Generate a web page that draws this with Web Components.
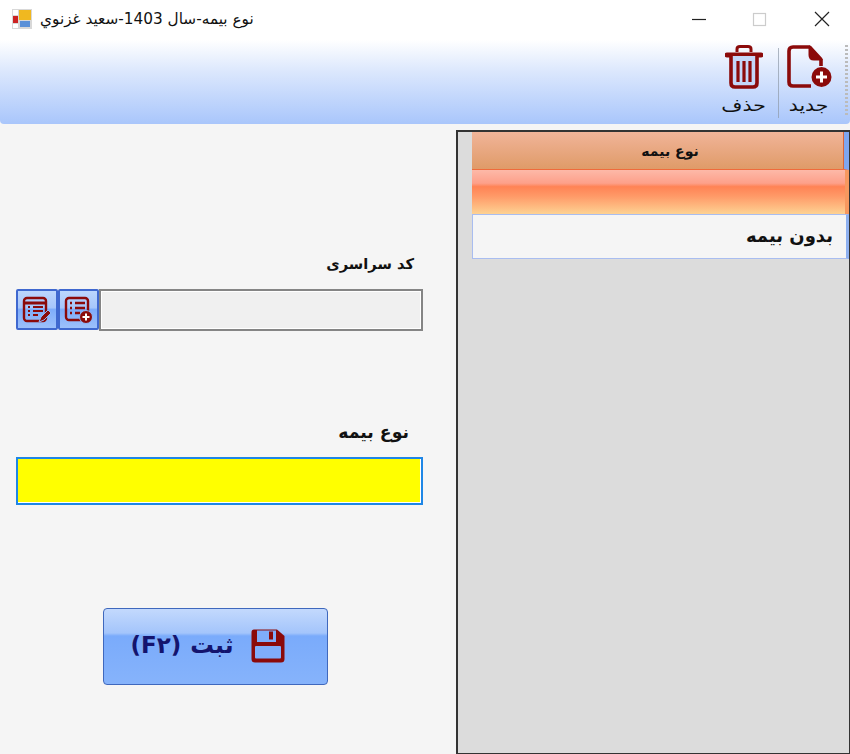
<!DOCTYPE html>
<html lang="fa"><head><meta charset="utf-8"><style>
html,body{margin:0;height:100%;background:#f5f5f5}
body{width:850px;height:754px;overflow:hidden;font-family:"DejaVu Sans",sans-serif}
</style></head><body>
<app-window></app-window>
<script>
const RED='#8b0a0a';
const ICONS={
 file:`<svg width="45" height="43" viewBox="0 0 45 43"><path d="M23 2V10Q23 14 27 14H34Z" fill="${RED}" stroke="${RED}" stroke-width="3" stroke-linejoin="round"/><path d="M23 2H6Q2 2 2 6V37Q2 41 6 41H24M34 14V21" fill="none" stroke="${RED}" stroke-width="3.600"/><circle cx="34.500" cy="32" r="10" fill="${RED}"/><path d="M34.500 26.500V37.500M29 32H40" stroke="#fff" stroke-width="3"/></svg>`,
 trash:`<svg width="38" height="44" viewBox="0 0 38 44"><path d="M12 7V4Q12 1.500 15 1.500H23Q26 1.500 26 4V7" fill="none" stroke="${RED}" stroke-width="3"/><path d="M2 10H36" stroke="${RED}" stroke-width="5" stroke-linecap="round"/><path d="M6 11V38Q6 42 10 42H28Q32 42 32 38V11" fill="#c4d6f8" stroke="${RED}" stroke-width="3.600"/><path d="M13 16V37M19 16V37M25 16V37" stroke="${RED}" stroke-width="3.200"/></svg>`,
 edit:`<svg width="30" height="28" viewBox="0 0 30 28"><rect x="2" y="2" width="22" height="23" rx="3" fill="none" stroke="${RED}" stroke-width="2.400"/><path d="M2 7H24" stroke="${RED}" stroke-width="3"/><path d="M6 11H8M11 11H21M6 15H8M11 15H21M6 19H8M11 19H16" stroke="${RED}" stroke-width="2"/><path d="M17 26L19 21L26 14L29 17L22 24Z" fill="${RED}" stroke="#8fb8fa" stroke-width="1"/></svg>`,
 add:`<svg width="30" height="28" viewBox="0 0 30 28"><rect x="2" y="2" width="22" height="22" rx="3" fill="none" stroke="${RED}" stroke-width="2.400"/><path d="M6 7H8M11 7H21M6 12H8M11 12H21M6 17H8M11 17H16" stroke="${RED}" stroke-width="2.400"/><circle cx="22" cy="21" r="6.500" fill="${RED}" stroke="#8fb8fa"/><path d="M22 17.500V24.500M18.500 21H25.500" stroke="#fff" stroke-width="2"/></svg>`,
 save:`<svg width="34" height="34" viewBox="0 0 34 34" style="margin:2px 0 0 17px"><path d="M3 0.500H26L33.500 7V30Q33.500 33.500 30 33.500H4Q0.500 33.500 0.500 30V3Q0.500 0.500 3 0.500Z" fill="${RED}"/><rect x="6" y="1.500" width="19" height="11.500" fill="#7fadfb"/><rect x="18" y="2.500" width="4" height="8" fill="${RED}"/><rect x="4" y="17" width="26" height="12.500" rx="1" fill="#7fadfb"/></svg>`,
 app:`<svg width="20" height="20" viewBox="0 0 20 20"><rect width="20" height="20" fill="#d8d8d8"/><rect x="1" y="7" width="5" height="7" fill="#c22"/><rect x="7" y="1" width="12" height="10" fill="#f0b820"/><rect x="8" y="12" width="10" height="6" fill="#5a90d8"/><path d="M1 1H6V6H1ZM1 15H6V19H1Z" fill="#fff"/></svg>`
};
function def(name,css,html){
 customElements.define(name,class extends HTMLElement{
  connectedCallback(){
   if(this.shadowRoot)return;
   const s=this.attachShadow({mode:'open'});
   const h=typeof html==='function'?html(this):html;
   s.innerHTML=`<style>${css}</style>${h}`;
  }
 });
}
def('win-title',`:host{display:flex;height:40px;background:#fff;align-items:center;box-sizing:border-box;padding:0 20px 2px 12px;color:#111;font:15.300px "DejaVu Sans",sans-serif}
 .i{display:flex;margin-right:8px}.t{direction:rtl}
 .b{display:flex;margin-left:auto;align-items:center}`,
 `<span class="i">${ICONS.app}</span><span class="t" dir="rtl">نوع بيمه-سال 1403-سعيد غزنوي</span>
 <span class="b"><svg width="16" height="16"><path d="M1 8.500H15" stroke="#222" stroke-width="1.200"/></svg><svg width="16" height="16" style="margin-left:44px"><rect x="2.500" y="2.500" width="12" height="12" fill="none" stroke="#ccc" stroke-width="1.200"/></svg><svg width="16" height="16" style="margin-left:47px"><path d="M1 1L15 15M15 1L1 15" stroke="#222" stroke-width="1.200"/></svg></span>`);
def('tool-button',`:host{display:flex;flex-direction:column;align-items:center;justify-content:flex-end;width:56px;height:78px;color:#111;font:17px "DejaVu Sans",sans-serif}
 .ic{display:flex;flex:1;align-items:flex-start;padding-top:5px}.l{display:inline-block;line-height:24px;margin-bottom:1px;transform:scaleX(1.200)}`,
 h=>`<span class="ic">${ICONS[h.getAttribute('icon')]}</span><span class="l">${h.getAttribute('label')}</span>`);
def('tool-bar',`:host{display:flex;justify-content:flex-end;align-items:center;height:84px;box-sizing:border-box;padding:0 2px 6px 0;background:linear-gradient(#fff 0%,#dbe7fd 38%,#a9c6fb 100%);border-radius:0 0 4px 4px}
 .sep{width:1px;height:70px;background:#8f9aa8;margin:8px 2px 0 6px;opacity:.7}
 .grip{width:3px;height:70px;margin:2px 0 0 8px;background:repeating-linear-gradient(#bbb 0 2px,transparent 2px 4px)}`,
 `<tool-button icon="trash" label="حذف"></tool-button><span class="sep"></span><tool-button icon="file" label="جديد"></tool-button><span class="grip"></span>`);
def('form-label',`:host{display:block;direction:rtl;font-weight:700;color:#111}`,`<slot></slot>`);
def('icon-btn',`:host{display:flex;align-items:center;justify-content:center;width:41px;height:41px;box-sizing:border-box;border:2px solid #3f68cf;border-radius:2px;background:linear-gradient(#bcd6fd 0%,#a6c6fb 45%,#7fadfb 50%,#9cc0fb 100%)}
 :host(.w){width:42px}`,
 h=>ICONS[h.getAttribute('icon')]);
def('code-field',`:host{display:flex;height:42px}
 .box{flex:1;box-sizing:border-box;border:2px solid #858585;box-shadow:inset 0 0 0 1px #fff;background:#f0f0f0}`,
 `<icon-btn class="w" icon="edit"></icon-btn><icon-btn icon="add"></icon-btn><div class="box"></div>`);
def('text-field',`:host{display:block;height:48px;box-sizing:border-box;border:2px solid #1e86e6;box-shadow:inset -1px -1px 0 #fff;background:#ff0}`,``);
def('save-button',`:host{display:flex;align-items:center;justify-content:center;width:225px;height:77px;box-sizing:border-box;border:1px solid #3f68bd;border-radius:4px;background:linear-gradient(#c3d9fd 0%,#a4c5fb 32%,#7aabfb 36%,#86b3fb 100%);color:#14146e;font:700 23.500px "DejaVu Sans",sans-serif;padding:0 16px 4px 0}
 .t{direction:rtl;unicode-bidi:isolate}.k{font-size:23px;margin-right:9px}`,
 `<span class="t k">(F۲)</span><span class="t">ثبت</span>${ICONS.save}`);
def('form-panel',`:host{display:flex;flex-direction:column;width:456px;box-sizing:border-box;padding:131px 33px 0 16px;background:#f5f5f5}
 .l1{font-size:14.700px;margin:0 9px 16px 0;line-height:18px}
 .l2{font-size:17.300px;margin:89px 14px 13px 0;line-height:24px}
 .s{margin:103px 0 0 87px}`,
 `<form-label class="l1">کد سراسری</form-label><code-field></code-field><form-label class="l2">نوع بيمه</form-label><text-field></text-field><save-button class="s"></save-button>`);
def('grid-cell',`:host{display:flex;align-items:center;box-sizing:border-box;margin-left:14px;direction:rtl}`,`<slot></slot>`);
def('data-grid',`:host{display:block;flex:1;box-sizing:border-box;background:#dcdcdc;border:solid #333;border-width:2px 1px 1px 2px;margin-top:6px;color:#111}
 .h{height:38px;justify-content:center;font-size:14px;font-weight:700;padding-left:24px;background:linear-gradient(#f1b499,#df9b68);border-bottom:1px solid #ef6b3c;border-right:5px solid #7ea6ef;box-shadow:inset -1px 0 0 #d9663a}
 .s{height:44px;background:linear-gradient(#fdb9a8 0%,#fda08a 30%,#ff8355 38%,#ff9a68 60%,#fdd293 100%);border-right:4px solid #f7985f}
 .r{height:45px;padding:0 13px 3px 0;font-size:18px;font-weight:700;background:#f5f5f5;border:1px solid #a9bdf0;border-right:3px solid #8db0f0}`,
 `<grid-cell class="h">نوع بيمه</grid-cell><grid-cell class="s"></grid-cell><grid-cell class="r">بدون بيمه</grid-cell>`);
def('app-window',`:host{display:flex;flex-direction:column;height:754px;width:850px}.m{display:flex;flex:1;min-height:0}`,
 `<win-title></win-title><tool-bar></tool-bar><div class="m"><form-panel></form-panel><data-grid></data-grid></div>`);
</script>
</body></html>
